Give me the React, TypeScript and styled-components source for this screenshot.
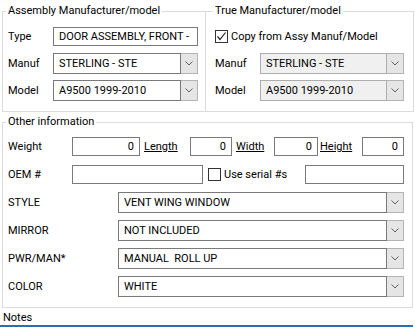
import React from "react";
import styled, { createGlobalStyle } from "styled-components";

const GlobalStyle = createGlobalStyle`
  body {
    margin: 0;
    background: #ffffff;
    font-family: Roboto, "Liberation Sans", Arial, sans-serif;
    font-size: 11px;
    color: #000000;
  }
`;

const Page = styled.div`
  width: 415px;
  height: 327px;
  overflow: hidden;
  background: #ffffff;
`;

const TopRow = styled.div`
  display: flex;
  padding: 4px 0 0 2px;
`;

const OtherWrap = styled.div`
  padding: 3px 0 0 2px;
`;

const Group = styled.fieldset<{ $w: number; $h: number; $pl: number }>`
  box-sizing: border-box;
  width: ${(p) => p.$w}px;
  height: ${(p) => p.$h}px;
  margin: 0;
  padding: 0 0 0 ${(p) => p.$pl}px;
  border: 1px solid #dcdcdc;
  min-width: 0;
  & + & {
    margin-left: -1px;
  }
`;

const Title = styled.legend`
  padding: 0 2px;
  margin-left: -2px;
  line-height: 14px;
  font-size: 11px;
`;

const FieldGrid = styled.div<{ $top: number; $gap: number }>`
  display: flex;
  flex-direction: column;
  gap: ${(p) => p.$gap}px;
  padding-top: ${(p) => p.$top}px;
`;

const Row = styled.div`
  display: flex;
  align-items: center;
  height: 21px;
`;

const Label = styled.span<{ $w: number }>`
  width: ${(p) => p.$w}px;
  flex: none;
  white-space: nowrap;
`;

const LinkLabel = styled.span<{ $w: number; $pl: number }>`
  width: ${(p) => p.$w}px;
  padding-left: ${(p) => p.$pl}px;
  box-sizing: border-box;
  flex: none;
  text-decoration: underline;
  white-space: nowrap;
`;

const TextBox = styled.div<{ $w: number; $right?: boolean }>`
  box-sizing: border-box;
  width: ${(p) => p.$w}px;
  height: 19px;
  flex: none;
  border: 1px solid #7a7a7a;
  background: #ffffff;
  padding: 0 ${(p) => (p.$right ? 5 : 3)}px 0 5px;
  line-height: 17px;
  text-align: ${(p) => (p.$right ? "right" : "left")};
  white-space: nowrap;
  overflow: hidden;
`;

const Combo = styled.div<{ $w: number }>`
  display: flex;
  width: ${(p) => p.$w}px;
  height: 21px;
  flex: none;
`;

const ComboText = styled.div<{ $disabled?: boolean }>`
  flex: 1;
  box-sizing: border-box;
  border: 1px solid ${(p) => (p.$disabled ? "#adadad" : "#7a7a7a")};
  background: ${(p) => (p.$disabled ? "#f0f0f0" : "#ffffff")};
  padding-left: 5px;
  line-height: 19px;
  white-space: pre;
  overflow: hidden;
`;

const ComboButton = styled.div`
  width: 17px;
  box-sizing: border-box;
  border: 1px solid #b4b4b4;
  border-left: none;
  background: #e5e5e5;
  display: flex;
  align-items: center;
  justify-content: center;
`;

const CheckRow = styled.label<{ $w?: number; $pl?: number }>`
  display: flex;
  align-items: center;
  gap: 3px;
  flex: none;
  box-sizing: border-box;
  width: ${(p) => (p.$w ? `${p.$w}px` : "auto")};
  padding-left: ${(p) => p.$pl ?? 0}px;
`;

const Box = styled.span`
  width: 13px;
  height: 13px;
  box-sizing: border-box;
  border: 1px solid #333333;
  background: #ffffff;
  display: flex;
  align-items: center;
  justify-content: center;
`;

const NotesBar = styled.div`
  width: 413px;
  margin-top: 3px;
  padding-left: 3px;
  box-sizing: border-box;
  line-height: 14px;
  border-bottom: 2px solid #1e73be;
`;

const Chevron = () => (
  <svg width="8" height="5" viewBox="0 0 8 5">
    <polyline points="0.5,0.5 4,4 7.5,0.5" fill="none" stroke="#606060" strokeWidth="1" />
  </svg>
);

const Select = ({ w, value, disabled }: { w: number; value: string; disabled?: boolean }) => (
  <Combo $w={w}>
    <ComboText $disabled={disabled}>{value}</ComboText>
    <ComboButton>
      <Chevron />
    </ComboButton>
  </Combo>
);

const Check = ({ checked }: { checked: boolean }) => (
  <Box>
    {checked && (
      <svg width="11" height="11" viewBox="0 0 11 11">
        <polyline points="1.5,5.5 4,8.5 9.5,1.5" fill="none" stroke="#222" strokeWidth="1.2" />
      </svg>
    )}
  </Box>
);

const dropdowns = [
  { label: "STYLE", value: "VENT WING WINDOW" },
  { label: "MIRROR", value: "NOT INCLUDED" },
  { label: "PWR/MAN*", value: "MANUAL  ROLL UP" },
  { label: "COLOR", value: "WHITE" },
];

export default function App() {
  return (
    <Page>
      <GlobalStyle />
      <TopRow>
        <Group $w={204} $h={108} $pl={5}>
          <Title>Assembly Manufacturer/model</Title>
          <FieldGrid $top={8} $gap={6}>
            <Row>
              <Label $w={45}>Type</Label>
              <TextBox $w={145}>DOOR ASSEMBLY, FRONT -</TextBox>
            </Row>
            <Row>
              <Label $w={45}>Manuf</Label>
              <Select w={145} value="STERLING - STE" />
            </Row>
            <Row>
              <Label $w={45}>Model</Label>
              <Select w={145} value="A9500 1999-2010" />
            </Row>
          </FieldGrid>
        </Group>
        <Group $w={209} $h={108} $pl={9}>
          <Title>True Manufacturer/model</Title>
          <FieldGrid $top={8} $gap={6}>
            <Row>
              <CheckRow>
                <Check checked />
                <span>Copy from Assy Manuf/Model</span>
              </CheckRow>
            </Row>
            <Row>
              <Label $w={45}>Manuf</Label>
              <Select w={144} value="STERLING - STE" disabled />
            </Row>
            <Row>
              <Label $w={45}>Model</Label>
              <Select w={144} value="A9500 1999-2010" disabled />
            </Row>
          </FieldGrid>
        </Group>
      </TopRow>
      <OtherWrap>
        <Group $w={411} $h={193} $pl={5}>
          <Title>Other information</Title>
          <FieldGrid $top={7} $gap={7}>
            <Row>
              <Label $w={64}>Weight</Label>
              <TextBox $w={68} $right>0</TextBox>
              <LinkLabel $w={50} $pl={4}>Length</LinkLabel>
              <TextBox $w={42} $right>0</TextBox>
              <LinkLabel $w={42} $pl={4}>Width</LinkLabel>
              <TextBox $w={44} $right>0</TextBox>
              <LinkLabel $w={44} $pl={2}>Height</LinkLabel>
              <TextBox $w={42} $right>0</TextBox>
            </Row>
            <Row>
              <Label $w={64}>OEM #</Label>
              <TextBox $w={131} />
              <CheckRow $w={102} $pl={5}>
                <Check checked={false} />
                <span>Use serial #s</span>
              </CheckRow>
              <TextBox $w={99} />
            </Row>
            {dropdowns.map((d) => (
              <Row key={d.label}>
                <Label $w={110}>{d.label}</Label>
                <Select w={286} value={d.value} />
              </Row>
            ))}
          </FieldGrid>
        </Group>
      </OtherWrap>
      <NotesBar>Notes</NotesBar>
    </Page>
  );
}
